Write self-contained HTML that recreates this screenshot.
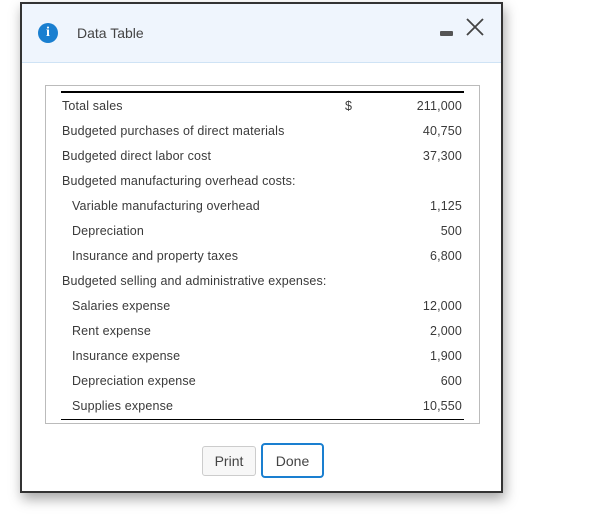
<!DOCTYPE html>
<html><head><style>
body{margin:0;width:604px;height:526px;background:#fff;font-family:"Liberation Sans",sans-serif;position:relative;overflow:hidden}
.dlg{position:absolute;left:20px;top:2px;width:479px;height:487px;border:2px solid #333;background:#fff;box-shadow:2px 6px 12px rgba(0,0,0,.35)}
.hd{height:58px;background:#eff5fd;border-bottom:1px solid #cfe3f5;position:relative}
.ic{position:absolute;left:16px;top:19px;width:20px;height:20px;border-radius:50%;background:#1a7fd0;color:#fff;font:bold 14px "Liberation Serif",serif;text-align:center;line-height:20px}
.tt{position:absolute;left:55px;top:21px;font-size:14px;color:#444}
.mn{position:absolute;left:418px;top:27px;width:13px;height:5px;background:#555;border-radius:1px}
.x{position:absolute;left:444px;top:14px}
.box{position:absolute;left:23px;top:81px;width:433px;height:337px;border:1px solid #bbb}
.rule{position:absolute;left:15px;width:403px;height:2px;background:#000}
.r{position:absolute;left:16px;width:400px;font-size:12.5px;letter-spacing:.15px;color:#3a3a3a;height:16px}
.r .v{position:absolute;right:0;top:0}
.r .d{position:absolute;left:283px;top:0}
.btn{position:absolute;font-size:14px;color:#444;text-align:center;border-radius:3px}
</style></head><body>
<div class="dlg">
<div class="hd"><div class="ic">i</div><div class="tt">Data Table</div><div class="mn"></div>
<svg class="x" width="18" height="18" viewBox="0 0 18 18"><path d="M1 1L17 17M17 1L1 17" stroke="#444" stroke-width="1.8" fill="none"/></svg></div>
<div class="box">
<div class="rule" style="top:5px"></div>
<div class="r" style="top:13px">Total sales<span class="d">$</span><span class="v">211,000</span></div>
<div class="r" style="top:38px">Budgeted purchases of direct materials<span class="v">40,750</span></div>
<div class="r" style="top:63px">Budgeted direct labor cost<span class="v">37,300</span></div>
<div class="r" style="top:88px">Budgeted manufacturing overhead costs:</div>
<div class="r" style="top:113px;padding-left:10px;width:390px">Variable manufacturing overhead<span class="v">1,125</span></div>
<div class="r" style="top:138px;padding-left:10px;width:390px">Depreciation<span class="v">500</span></div>
<div class="r" style="top:163px;padding-left:10px;width:390px">Insurance and property taxes<span class="v">6,800</span></div>
<div class="r" style="top:188px">Budgeted selling and administrative expenses:</div>
<div class="r" style="top:213px;padding-left:10px;width:390px">Salaries expense<span class="v">12,000</span></div>
<div class="r" style="top:238px;padding-left:10px;width:390px">Rent expense<span class="v">2,000</span></div>
<div class="r" style="top:263px;padding-left:10px;width:390px">Insurance expense<span class="v">1,900</span></div>
<div class="r" style="top:288px;padding-left:10px;width:390px">Depreciation expense<span class="v">600</span></div>
<div class="r" style="top:313px;padding-left:10px;width:390px">Supplies expense<span class="v">10,550</span></div>
<div class="rule" style="top:333px;height:1px"></div>
</div>
<div class="btn" style="left:180px;top:442px;width:52px;height:28px;line-height:28px;border:1px solid #ccc;background:#f7f7f7">Print</div>
<div class="btn" style="left:239px;top:439px;width:59px;height:31px;line-height:33px;border:2px solid #1a7fd0;border-radius:4px;background:#fff">Done</div>
</div>
</body></html>
